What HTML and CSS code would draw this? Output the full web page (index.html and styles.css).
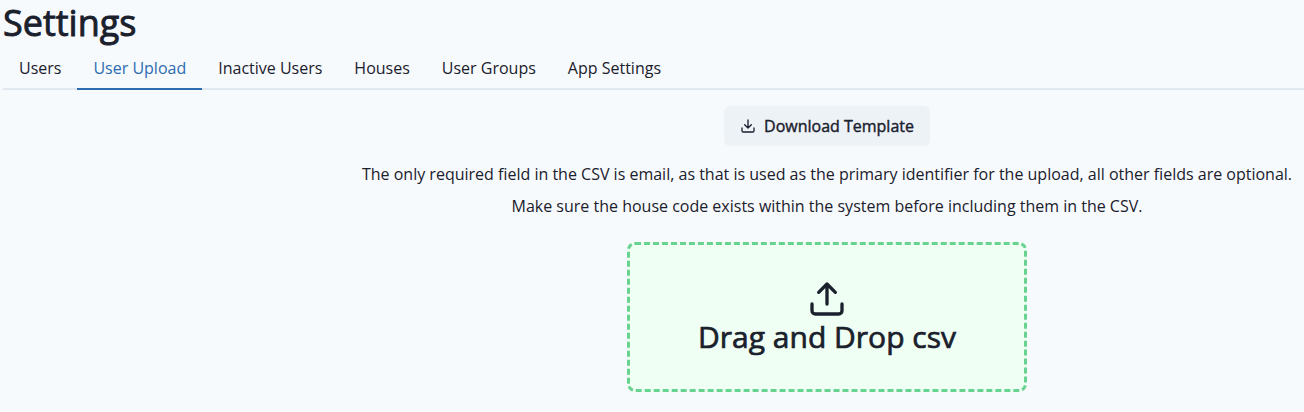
FILE: index.html
```html
<!DOCTYPE html>
<html lang="en">
<head>
<meta charset="utf-8">
<title>Settings</title>
<link rel="stylesheet" href="styles.css">
</head>
<body>
<main class="page">
  <h1 class="title">Settings</h1>
  <nav class="tabs">
    <a class="tab">Users</a>
    <a class="tab active">User Upload</a>
    <a class="tab">Inactive Users</a>
    <a class="tab">Houses</a>
    <a class="tab">User Groups</a>
    <a class="tab">App Settings</a>
  </nav>
  <section class="panel">
    <button class="download">
      <svg class="download-icon" viewBox="0 0 24 24"><path d="M21 15v4a2 2 0 0 1-2 2H5a2 2 0 0 1-2-2v-4M7 10l5 5 5-5M12 15V3"/></svg>
      <span>Download Template</span>
    </button>
    <p class="note">The only required field in the CSV is email, as that is used as the primary identifier for the upload, all other fields are optional.</p>
    <p class="note">Make sure the house code exists within the system before including them in the CSV.</p>
    <div class="dropzone">
      <svg class="upload-icon" viewBox="0 0 24 24"><path d="M21 15v4a2 2 0 0 1-2 2H5a2 2 0 0 1-2-2v-4M17 8l-5-5-5 5M12 3v12"/></svg>
      <h2 class="drop-title">Drag and Drop csv</h2>
    </div>
  </section>
</main>
</body>
</html>
```
FILE: styles.css
```css
* { box-sizing: border-box; margin: 0; }
body {
  background: #f7fafc;
  color: #1a202c;
  font: 16px/24px "Open Sans", sans-serif;
}
.page { padding-left: 3px; }
.title {
  height: 48px;
  font-size: 36px;
  line-height: 46px;
  font-weight: 400;
  -webkit-text-stroke: 0.9px currentColor;
}
.tabs { display: flex; height: 42px; border-bottom: 2px solid #e2e8f0; }
.tab { height: 42px; padding: 8px 16px; border-bottom: 2px solid transparent; }
.tab.active { color: #2b6cb0; border-color: #2b6cb0; }
.panel {
  display: flex;
  flex-direction: column;
  align-items: center;
  gap: 8px;
  padding: 16px 0 0 347px;
}
.note { white-space: nowrap; }
.download {
  display: flex;
  align-items: center;
  gap: 8px;
  height: 40px;
  margin-bottom: 8px;
  padding: 0 16px;
  border: 0;
  border-radius: 6px;
  background: #edf2f7;
  color: inherit;
  font: 400 16px/20px "Open Sans", sans-serif;
  -webkit-text-stroke: 0.4px currentColor;
}
svg { fill: none; stroke: currentColor; stroke-width: 2; stroke-linecap: round; stroke-linejoin: round; }
.download-icon { width: 16px; height: 16px; }
.dropzone {
  display: flex;
  flex-direction: column;
  align-items: center;
  justify-content: center;
  width: 400px;
  height: 150px;
  margin-top: 16px;
  border: 3px dashed #68d391;
  border-radius: 8px;
  background: #f0fff4;
}
.upload-icon { width: 40px; height: 40px; }
.drop-title {
  font-size: 30px;
  line-height: 36px;
  font-weight: 400;
  -webkit-text-stroke: 0.7px currentColor;
}
```
